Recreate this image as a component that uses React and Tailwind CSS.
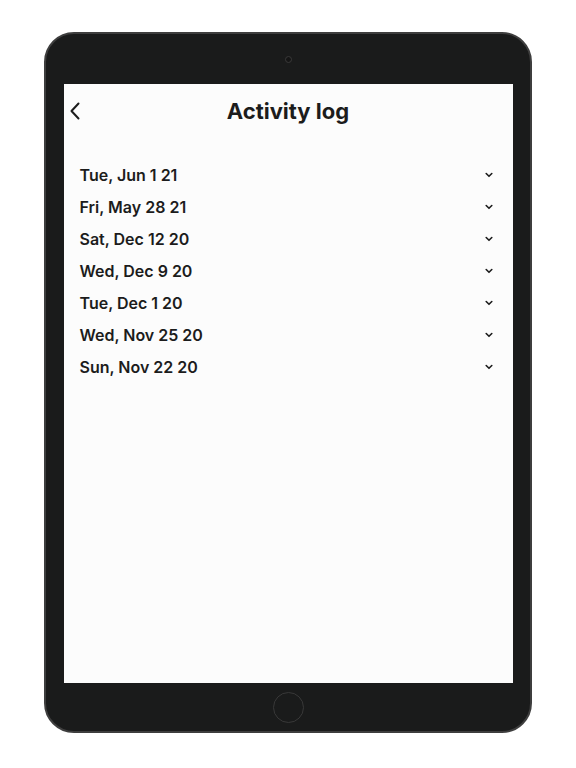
const entries = [
  "Tue, Jun 1 21",
  "Fri, May 28 21",
  "Sat, Dec 12 20",
  "Wed, Dec 9 20",
  "Tue, Dec 1 20",
  "Wed, Nov 25 20",
  "Sun, Nov 22 20",
];

function ChevronDown() {
  return (
    <svg width="8" height="6" viewBox="0 0 8 6" fill="none">
      <path d="M1.2 1.5 L4 4.3 L6.8 1.5" stroke="#1c1c1c" strokeWidth="1.6" strokeLinecap="round" strokeLinejoin="round" />
    </svg>
  );
}

function ChevronLeft() {
  return (
    <svg width="12" height="18" viewBox="0 0 12 18" fill="none">
      <path d="M9.5 1.5 L2.5 9 L9.5 16.5" stroke="#1c1c1c" strokeWidth="2" strokeLinecap="round" strokeLinejoin="round" />
    </svg>
  );
}

export default function App() {
  return (
    <div className="w-[576px] h-[768px] bg-white pl-[44px] pt-[32px] font-['Inter',sans-serif]">
      <div className="w-[488px] h-[701px] rounded-[30px] border-2 border-[#3e3e3e] bg-[#1a1b1b] flex flex-col items-center">
        <div className="h-[50px] w-full flex items-center justify-center">
          <div className="w-[7px] h-[7px] rounded-full border border-[#3a3a3a] bg-[#151515]" />
        </div>
        <div className="w-[449px] h-[599px] bg-[#fcfcfc] flex flex-col">
          <div className="relative h-[54px] flex items-center justify-center">
            <button className="absolute left-[5px] top-[18px] p-0">
              <ChevronLeft />
            </button>
            <h1 className="text-[22px] font-bold text-[#1c1c1c]">Activity log</h1>
          </div>
          <ul className="mt-[21px]">
            {entries.map((d) => (
              <li key={d} className="h-[32px] flex items-center justify-between pl-[16px] pr-[20px]">
                <span className="text-[16px] font-semibold text-[#1c1c1c]">{d}</span>
                <ChevronDown />
              </li>
            ))}
          </ul>
        </div>
        <div className="flex-1 w-full flex items-center justify-center">
          <div className="w-[31px] h-[31px] rounded-full border-[1.5px] border-[#383838]" />
        </div>
      </div>
    </div>
  );
}
